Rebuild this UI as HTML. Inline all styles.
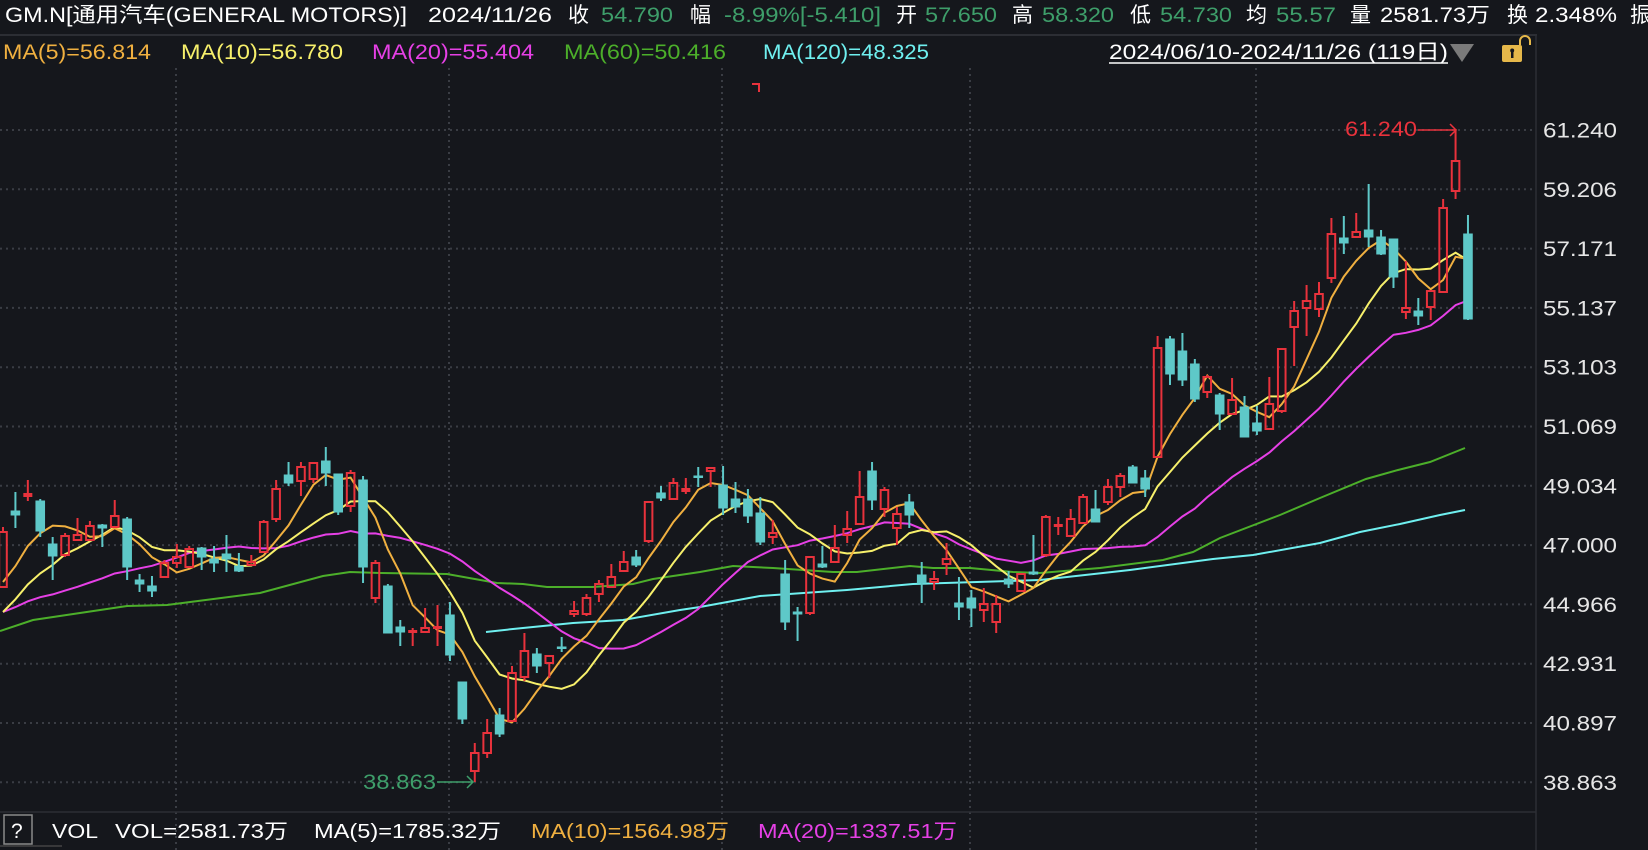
<!DOCTYPE html>
<html><head><meta charset="utf-8">
<style>
html,body{margin:0;padding:0;background:#15171c;overflow:hidden}
svg{display:block}
text{font-family:"Liberation Sans","Noto Sans CJK SC",sans-serif}
</style></head>
<body>
<svg id="s" width="1648" height="850" viewBox="0 0 1648 850" xmlns="http://www.w3.org/2000/svg">
<rect width="1648" height="850" fill="#15171c"/>
<line x1="0" y1="35" x2="1537" y2="35" stroke="#2c2e34" stroke-width="2"/>
<line x1="1536" y1="35" x2="1536" y2="850" stroke="#2c2e34" stroke-width="1.5"/>
<g id="grid"></g>
<g id="ma"></g>
<g id="candles"></g>
<g font-size="21">
<text x="5" y="22" fill="#fff" textLength="402" lengthAdjust="spacingAndGlyphs">GM.N[通用汽车(GENERAL MOTORS)]</text>
<text x="428" y="22" fill="#fff" textLength="124" lengthAdjust="spacingAndGlyphs">2024/11/26</text>
<text x="568" y="22" fill="#fff">收</text>
<text x="601" y="22" fill="#3e9e6a" textLength="72" lengthAdjust="spacingAndGlyphs">54.790</text>
<text x="690" y="22" fill="#fff">幅</text>
<text x="724" y="22" fill="#3e9e6a" textLength="157" lengthAdjust="spacingAndGlyphs">-8.99%[-5.410]</text>
<text x="896" y="22" fill="#fff">开</text>
<text x="925" y="22" fill="#3e9e6a" textLength="72" lengthAdjust="spacingAndGlyphs">57.650</text>
<text x="1012" y="22" fill="#fff">高</text>
<text x="1042" y="22" fill="#3e9e6a" textLength="72" lengthAdjust="spacingAndGlyphs">58.320</text>
<text x="1130" y="22" fill="#fff">低</text>
<text x="1160" y="22" fill="#3e9e6a" textLength="72" lengthAdjust="spacingAndGlyphs">54.730</text>
<text x="1246" y="22" fill="#fff">均</text>
<text x="1276" y="22" fill="#3e9e6a" textLength="60" lengthAdjust="spacingAndGlyphs">55.57</text>
<text x="1350" y="22" fill="#fff">量</text>
<text x="1380" y="22" fill="#fff" textLength="110" lengthAdjust="spacingAndGlyphs">2581.73万</text>
<text x="1507" y="22" fill="#fff">换</text>
<text x="1535" y="22" fill="#fff" textLength="82" lengthAdjust="spacingAndGlyphs">2.348%</text>
<text x="1630" y="22" fill="#fff">振</text>
</g>
<g font-size="21">
<text x="3" y="59" fill="#f0b040" textLength="148" lengthAdjust="spacingAndGlyphs">MA(5)=56.814</text>
<text x="181" y="59" fill="#f7f06b" textLength="162" lengthAdjust="spacingAndGlyphs">MA(10)=56.780</text>
<text x="372" y="59" fill="#e640e6" textLength="162" lengthAdjust="spacingAndGlyphs">MA(20)=55.404</text>
<text x="564" y="59" fill="#4caf2a" textLength="162" lengthAdjust="spacingAndGlyphs">MA(60)=50.416</text>
<text x="763" y="59" fill="#6ff0f0" textLength="166" lengthAdjust="spacingAndGlyphs">MA(120)=48.325</text>
<text x="1109" y="59" fill="#fff" textLength="339" lengthAdjust="spacingAndGlyphs">2024/06/10-2024/11/26 (119日)</text>
</g>
<line x1="1109" y1="63" x2="1448" y2="63" stroke="#fff" stroke-width="1.5"/>
<polygon points="1450,44 1474,44 1462,62" fill="#7a7a7a"/>
<rect x="1502" y="45" width="20" height="17" rx="2" fill="#e6b84a"/>
<rect x="1511" y="50" width="2.5" height="8" fill="#15171c"/>
<circle cx="1512.2" cy="50.5" r="2" fill="#15171c"/>
<path d="M1520 45 V41 A5 5 0 0 1 1530 41 V45" fill="none" stroke="#e6b84a" stroke-width="2"/>
<path d="M752 84 H759 V92" fill="none" stroke="#e8323c" stroke-width="2"/>
<g id="axis" font-size="21" fill="#e6e6e6"></g>
<text x="1345" y="136" font-size="21" fill="#e8323c" textLength="72" lengthAdjust="spacingAndGlyphs">61.240</text>
<path d="M1418 130 H1456 M1450 124 L1456 130 L1450 136" fill="none" stroke="#e8323c" stroke-width="1.5"/>
<text x="363" y="789" font-size="21" fill="#3e9e6a" textLength="73" lengthAdjust="spacingAndGlyphs">38.863</text>
<path d="M437 782 H473 M467 776 L473 782 L467 788" fill="none" stroke="#3e9e6a" stroke-width="1.5"/>
<line x1="0" y1="812" x2="1536" y2="812" stroke="#2c2e34" stroke-width="1.5"/>
<rect x="4" y="815" width="28" height="29" fill="none" stroke="#8a8a8a" stroke-width="1.5"/>
<text x="11" y="838" font-size="21" fill="#fff">?</text>
<line x1="0" y1="846" x2="62" y2="846" stroke="#444" stroke-width="1.5"/>
<g font-size="20">
<text x="52" y="838" fill="#fff" textLength="46" lengthAdjust="spacingAndGlyphs">VOL</text>
<text x="115" y="838" fill="#fff" textLength="173" lengthAdjust="spacingAndGlyphs">VOL=2581.73万</text>
<text x="314" y="838" fill="#fff" textLength="187" lengthAdjust="spacingAndGlyphs">MA(5)=1785.32万</text>
<text x="531" y="838" fill="#f0b040" textLength="198" lengthAdjust="spacingAndGlyphs">MA(10)=1564.98万</text>
<text x="758" y="838" fill="#e640e6" textLength="199" lengthAdjust="spacingAndGlyphs">MA(20)=1337.51万</text>
</g>
</svg>
<script>
var NS="http://www.w3.org/2000/svg";
function el(p,t,a){var e=document.createElementNS(NS,t);for(var k in a)e.setAttribute(k,a[k]);p.appendChild(e);return e;}
var grid=document.getElementById('grid'),axis=document.getElementById('axis');
var labels=["61.240","59.206","57.171","55.137","53.103","51.069","49.034","47.000","44.966","42.931","40.897","38.863"];
for(var k=0;k<12;k++){var y=130+k*59.3;
el(grid,'line',{x1:0,y1:y,x2:1536,y2:y,stroke:'#3a3d44','stroke-width':2,'stroke-dasharray':'2 4'});
var t=el(axis,'text',{x:1543,y:y+7.5,textLength:74,lengthAdjust:'spacingAndGlyphs'});t.textContent=labels[k];}
[176,449,722,970,1256].forEach(function(x){el(grid,'line',{x1:x,y1:68,x2:x,y2:850,stroke:'#3a3d44','stroke-width':2,'stroke-dasharray':'2 4'});});
var D=[
"r 532 587 527 587","c 511 515 492 528","r 494 496 480 501","c 501 531 499 537","c 544 556 537 580","r 536 555 533 557","r 535 540 518 541","r 526 540 521 541","c 525 528 524 547","r 516 527 500 527",
"c 519 567 517 580","c 580 584 574 592","c 586 591 576 597","r 563 577 560 578","r 557 563 544 568","r 549 567 546 567","c 548 557 547 570","c 559 563 546 572","c 554 559 535 572","c 566 571 553 572",
"r 562 565 555 566","r 522 552 520 553","r 489 519 480 522","c 475 483 462 486","r 467 481 462 496","r 463 479 463 483","c 461 473 447 486","c 474 512 474 515","r 473 506 470 512","c 480 567 476 583",
"r 563 598 560 603","c 586 633 584 633","c 627 632 620 646","r 631 632 628 646","r 628 632 608 633","r 627 628 605 646","c 615 655 602 661","c 682 719 682 724","r 753 771 743 782","r 733 753 719 758",
"c 715 734 708 737","r 673 721 666 722","r 651 677 633 681","c 654 666 648 673","r 656 663 656 678","c 647 648 637 652","r 611 614 601 617","r 598 614 594 616","r 584 594 580 602","r 577 587 564 587",
"r 562 571 551 572","c 557 565 550 567","r 502 541 502 543","c 493 498 486 501","r 483 499 478 499","r 489 491 478 494","c 476 477 467 487","r 468 471 467 487","c 485 508 466 515","c 499 507 482 513",
"c 499 516 489 523","c 513 542 497 545","r 533 537 520 544","c 574 622 560 630","c 612 614 607 641","r 557 613 556 615","c 564 567 546 568","r 548 562 525 563","r 529 535 511 543","r 497 524 471 525",
"c 471 500 462 510","r 490 509 487 517","r 514 528 507 545","c 502 515 494 528","c 575 583 562 603","r 579 582 571 590","r 559 564 543 575","c 603 607 577 620","c 598 608 590 627","r 604 610 588 622",
"r 604 622 595 633","c 579 584 571 588","r 574 591 574 592","c 572 574 535 575","r 517 555 515 557","r 525 526 517 535","r 519 536 509 537","r 497 523 494 524","c 509 522 490 522","r 487 502 479 505",
"r 476 487 473 497","c 467 483 465 483","c 478 489 470 497","r 348 457 336 457","c 339 374 336 385","c 351 380 333 386","c 364 399 359 402","r 377 392 375 398","c 395 414 393 430","r 400 414 378 415",
"c 407 437 396 437","c 423 431 406 435","r 404 429 377 430","r 349 411 349 413","r 311 327 301 366","r 301 308 285 336","r 294 309 282 317","r 234 278 218 283","c 238 243 216 254","r 232 237 213 238",
"c 230 237 184 247","c 237 254 230 255","c 239 277 239 288","r 308 312 261 319","c 311 316 298 325","r 291 307 291 320","r 208 292 199 293","r 161 191 129 199","c 234 319 215 320"];
var cg=document.getElementById('candles'),closes=[];
var pad=[];for(var i=0;i<10;i++)pad.push(612);for(i=0;i<5;i++)pad.push(642);for(i=0;i<4;i++)pad.push(594.5);
D.forEach(function(s,i){var p=s.split(' '),red=p[0]=='r',t=+p[1],b=+p[2],h=+p[3],l=+p[4],x=3+i*12.415;
var col=red?'#e8323c':'#5ec8c8';closes.push(red?t:b);
if(red){el(cg,'line',{x1:x,y1:h,x2:x,y2:t,stroke:col,'stroke-width':2});el(cg,'line',{x1:x,y1:b,x2:x,y2:l,stroke:col,'stroke-width':2});
if(b-t<3){el(cg,'rect',{x:x-4.5,y:t-1,width:9,height:Math.max(2.5,b-t+2),fill:col});}
else el(cg,'rect',{x:x-3.8,y:t,width:7.6,height:b-t,fill:'none',stroke:col,'stroke-width':2});}
else{el(cg,'line',{x1:x,y1:h,x2:x,y2:l,stroke:col,'stroke-width':2});el(cg,'rect',{x:x-4.8,y:t-0.5,width:9.6,height:Math.max(2.5,b-t+1),fill:col});}
});
var all=pad.concat(closes),mg=document.getElementById('ma');
function ma(n,color){var pts=[];for(var i=0;i<closes.length;i++){var j=i+19,s=0;for(var k=0;k<n;k++)s+=all[j-k];pts.push((3+i*12.415).toFixed(1)+','+(s/n).toFixed(1));}
el(mg,'polyline',{points:pts.join(' '),fill:'none',stroke:color,'stroke-width':2});}
el(mg,'polyline',{points:"0,631 33,620 127,606 167,605 260,593 323,576 350,572 380,573 447,574 497,583 523,584 547,587 593,587 633,584 653,579 700,572 733,566 773,568 833,572 857,572 910,566 933,568 970,568 1013,572 1040,573 1100,568 1163,560 1193,552 1220,538 1280,515 1320,498 1366,479 1398,470 1430,462 1465,448",fill:'none',stroke:'#4caf2a','stroke-width':2});
el(mg,'polyline',{points:"486,632 513,629 573,623 623,620 680,610 700,607 760,596 847,590 913,584 1040,580 1130,570 1213,559 1253,555 1320,543 1360,532 1400,524 1440,515 1465,510",fill:'none',stroke:'#6ff0f0','stroke-width':2});
ma(20,'#e640e6');ma(10,'#f7f06b');ma(5,'#f0b040');
</script>
</body></html>
